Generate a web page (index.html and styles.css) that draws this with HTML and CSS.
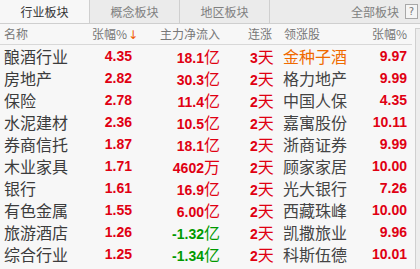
FILE: index.html
```html
<!DOCTYPE html>
<html lang="zh">
<head>
<meta charset="utf-8">
<link rel="stylesheet" href="styles.css">
</head>
<body>
<div class="app">
  <div class="tabs">
    <div class="tab active">行业板块</div>
    <div class="tab">概念板块</div>
    <div class="tab">地区板块</div>
    <div class="tab-rest">
      <span class="all">全部板块</span>
      <span class="help">?</span>
    </div>
  </div>
  <div class="body">
    <div class="table">
      <div class="row head">
        <div class="c name">名称</div>
        <div class="c zf">张幅%<span class="arrow">↓</span></div>
        <div class="c flow">主力净流入</div>
        <div class="c lz">连涨</div>
        <div class="c stock">领涨股</div>
        <div class="c zf2">张幅%</div>
      </div>
      <div class="row"><div class="c name">酿酒行业</div><div class="c zf num red">4.35</div><div class="c flow red"><span class="num">18.1</span><span class="cj">亿</span></div><div class="c lz red"><span class="num">3</span><span class="cj">天</span></div><div class="c stock orange">金种子酒</div><div class="c zf2 num red">9.97</div></div>
      <div class="row"><div class="c name">房地产</div><div class="c zf num red">2.82</div><div class="c flow red"><span class="num">30.3</span><span class="cj">亿</span></div><div class="c lz red"><span class="num">2</span><span class="cj">天</span></div><div class="c stock">格力地产</div><div class="c zf2 num red">9.99</div></div>
      <div class="row"><div class="c name">保险</div><div class="c zf num red">2.78</div><div class="c flow red"><span class="num">11.4</span><span class="cj">亿</span></div><div class="c lz red"><span class="num">2</span><span class="cj">天</span></div><div class="c stock">中国人保</div><div class="c zf2 num red">4.35</div></div>
      <div class="row"><div class="c name">水泥建材</div><div class="c zf num red">2.36</div><div class="c flow red"><span class="num">10.5</span><span class="cj">亿</span></div><div class="c lz red"><span class="num">2</span><span class="cj">天</span></div><div class="c stock">嘉寓股份</div><div class="c zf2 num red">10.11</div></div>
      <div class="row"><div class="c name">券商信托</div><div class="c zf num red">1.87</div><div class="c flow red"><span class="num">18.1</span><span class="cj">亿</span></div><div class="c lz red"><span class="num">2</span><span class="cj">天</span></div><div class="c stock">浙商证券</div><div class="c zf2 num red">9.99</div></div>
      <div class="row"><div class="c name">木业家具</div><div class="c zf num red">1.71</div><div class="c flow red"><span class="num">4602</span><span class="cj">万</span></div><div class="c lz red"><span class="num">2</span><span class="cj">天</span></div><div class="c stock">顾家家居</div><div class="c zf2 num red">10.00</div></div>
      <div class="row"><div class="c name">银行</div><div class="c zf num red">1.61</div><div class="c flow red"><span class="num">16.9</span><span class="cj">亿</span></div><div class="c lz red"><span class="num">2</span><span class="cj">天</span></div><div class="c stock">光大银行</div><div class="c zf2 num red">7.26</div></div>
      <div class="row"><div class="c name">有色金属</div><div class="c zf num red">1.55</div><div class="c flow red"><span class="num">6.00</span><span class="cj">亿</span></div><div class="c lz red"><span class="num">2</span><span class="cj">天</span></div><div class="c stock">西藏珠峰</div><div class="c zf2 num red">10.00</div></div>
      <div class="row"><div class="c name">旅游酒店</div><div class="c zf num red">1.26</div><div class="c flow green"><span class="num">-1.32</span><span class="cj">亿</span></div><div class="c lz red"><span class="num">2</span><span class="cj">天</span></div><div class="c stock">凯撒旅业</div><div class="c zf2 num red">9.96</div></div>
      <div class="row"><div class="c name">综合行业</div><div class="c zf num red">1.25</div><div class="c flow green"><span class="num">-1.34</span><span class="cj">亿</span></div><div class="c lz red"><span class="num">2</span><span class="cj">天</span></div><div class="c stock">科斯伍德</div><div class="c zf2 num red">10.01</div></div>
    </div>
    <div class="scrollbar"></div>
  </div>
</div>
</body>
</html>
```

FILE: styles.css
```css
* { box-sizing: border-box; }
html, body { margin: 0; padding: 0; }
body {
  width: 420px;
  height: 269px;
  overflow: hidden;
  background: #f7f7f7;
  font-family: "Noto Sans CJK SC", "DejaVu Sans", sans-serif;
  color: #444;
}
.app { width: 420px; }

.tabs {
  display: flex;
  height: 24px;
  border-bottom: 1px solid #cfcfcf;
  background: #ebebeb;
}
.tab {
  width: 90px;
  flex: none;
  border-right: 1px solid #cfcfcf;
  display: flex;
  align-items: center;
  justify-content: center;
  font-size: 12px;
  color: #808080;
  line-height: 1;
}
.tab.active {
  background: #f7f7f7;
  color: #333;
}
.tab-rest {
  flex: 1;
  display: flex;
  align-items: center;
  justify-content: flex-end;
  padding-right: 2px;
  font-size: 12px;
  color: #808080;
}
.all { margin-right: 6px; line-height: 1; }
.help {
  width: 13px;
  height: 15px;
  border: 1px solid #a8a8a8;
  background: #f5f5f5;
  display: flex;
  align-items: center;
  justify-content: center;
  font-family: "DejaVu Sans", sans-serif;
  font-size: 10px;
  color: #777;
}

.body { display: flex; }
.table { flex: 1; }
.scrollbar {
  width: 5px;
  margin-top: 4px;
  height: 241px;
  border-left: 1px solid #d0d0d0;
  border-top: 1px solid #d0d0d0;
  background: #ededed;
}

.row {
  display: grid;
  grid-template-columns: 88px 40px 88px 63px 67px 57px;
  padding-left: 4px;
  height: 22px;
  align-items: center;
  white-space: nowrap;
}
.row.head {
  height: 21px;
  border-bottom: 1px solid #d8d8d8;
  margin-right: 3px;
  font-size: 12px;
  color: #777;
}
.c { line-height: 1; }
.row:not(.head) .c { font-size: 16px; }
.zf, .flow, .zf2 { text-align: right; }
.lz { padding-left: 30px; }
.stock { padding-left: 0; }
.row.head .stock { padding-left: 1px; }
.row.head .lz { padding-left: 28px; }

.row:not(.head) .num, .row:not(.head) .c.num {
  font-family: "Liberation Sans", Arial, sans-serif;
  font-weight: bold;
  font-size: 14px;
}
.cj { font-size: 16px; }
.red { color: #e00012; }
.green { color: #009a00; }
.orange { color: #f06a00; }
.row:not(.head) .name { color: #3c3c3c; }
.row:not(.head) .stock { color: #444; }
.row:not(.head) .stock.orange { color: #f06a00; }
.arrow {
  color: #f05a00;
  font-family: "DejaVu Sans", sans-serif;
  font-size: 12px;
  margin-left: 1px;
}
```
